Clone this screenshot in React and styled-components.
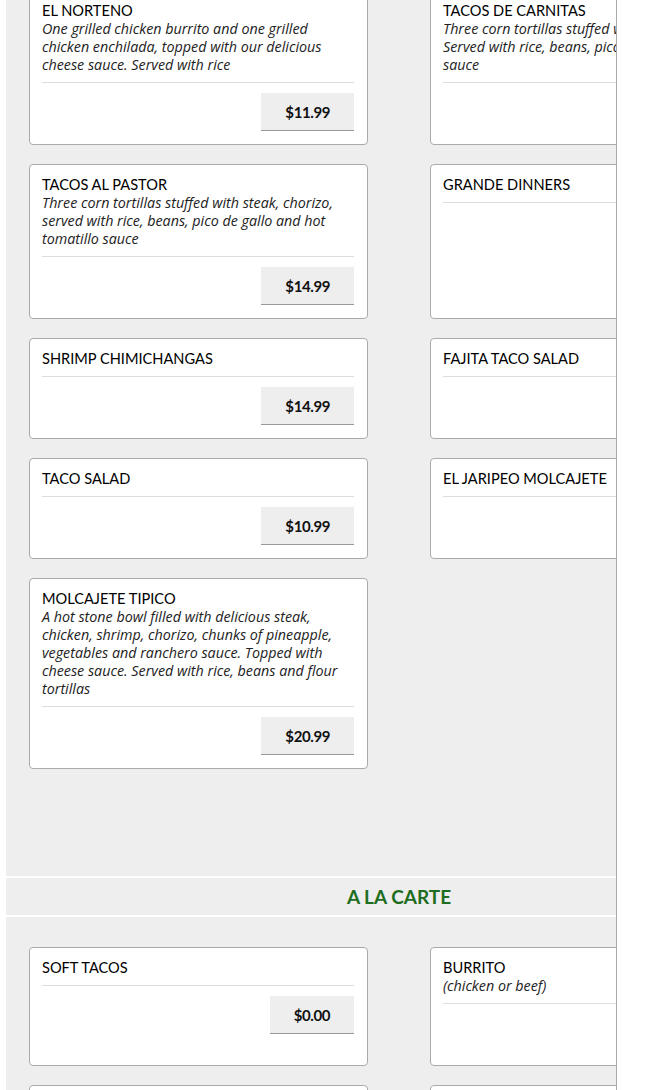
import React from "react";
import styled, { createGlobalStyle } from "styled-components";

const GlobalStyle = createGlobalStyle`
  body {
    margin: 0;
    background: #fff;
    font-family: "Lato", "Liberation Sans", sans-serif;
    color: #111;
  }
`;

const Frame = styled.div`
  margin-left: 6px;
  width: 610px;
  border-right: 1px solid #aaa;
  background: #eeeeee;
  overflow: hidden;
`;

const Inner = styled.div`
  width: 786px;
`;

const Grid = styled.div`
  display: grid;
  grid-template-columns: 339px 339px;
  column-gap: 62px;
  row-gap: 19px;
  padding: ${(p) => p.$pad};
  margin-top: ${(p) => p.$top || "0"};
`;

const Card = styled.div`
  background: #fff;
  border: 1px solid #aaa;
  border-radius: 4px;
  padding: 11px 13px 13px 12px;
  display: flex;
  flex-direction: column;
`;

const Head = styled.div`
  padding-bottom: 8px;
  border-bottom: 1px solid #ddd;
`;

const Title = styled.div`
  font-size: 14.6px;
  line-height: 18px;
  font-weight: 400;
  color: #000;
  text-transform: uppercase;
`;

const Desc = styled.div`
  font-family: "Open Sans", sans-serif;
  font-style: italic;
  font-size: 14.3px;
  line-height: 18px;
  color: #222;
`;

const Foot = styled.div`
  margin-top: 10px;
  display: flex;
  justify-content: flex-end;
`;

const Price = styled.button`
  height: 38px;
  padding: 0 24px;
  border: none;
  border-bottom: 1px solid #999;
  background: #eeeeee;
  font-family: "Lato", sans-serif;
  font-weight: 700;
  font-size: 15px;
  color: #111;
  letter-spacing: -0.4px;
`;

const SectionHead = styled.div`
  border-top: 2px solid #fff;
  border-bottom: 2px solid #fff;
  height: 37px;
  display: flex;
  align-items: center;
  justify-content: center;
  font-size: 19px;
  font-weight: 700;
  color: #1f6d1f;
`;

const dinners = [
  {
    name: "El Norteno",
    desc: "One grilled chicken burrito and one grilled chicken enchilada, topped with our delicious cheese sauce. Served with rice",
    price: "$11.99",
  },
  {
    name: "Tacos de Carnitas",
    desc: "Three corn tortillas stuffed with pork carnitas. Served with rice, beans, pico de gallo and hot sauce",
    price: "$13.99",
  },
  {
    name: "Tacos al Pastor",
    desc: "Three corn tortillas stuffed with steak, chorizo, served with rice, beans, pico de gallo and hot tomatillo sauce",
    price: "$14.99",
  },
  { name: "Grande Dinners", price: "$12.99" },
  { name: "Shrimp Chimichangas", price: "$14.99" },
  { name: "Fajita Taco Salad", price: "$11.99" },
  { name: "Taco Salad", price: "$10.99" },
  { name: "El Jaripeo Molcajete", price: "$22.99" },
  {
    name: "Molcajete Tipico",
    desc: "A hot stone bowl filled with delicious steak, chicken, shrimp, chorizo, chunks of pineapple, vegetables and ranchero sauce. Topped with cheese sauce. Served with rice, beans and flour tortillas",
    price: "$20.99",
  },
];

const carte = [
  { name: "Soft Tacos", price: "$0.00" },
  { name: "Burrito", desc: "(chicken or beef)", price: "$0.00" },
  { name: "Enchilada", price: "$0.00" },
  { name: "Tamale", price: "$0.00" },
];

const Item = ({ item }) => (
  <Card>
    <Head>
      <Title>{item.name}</Title>
      {item.desc && <Desc>{item.desc}</Desc>}
    </Head>
    <Foot>
      <Price>{item.price}</Price>
    </Foot>
  </Card>
);

export default function App() {
  return (
    <>
      <GlobalStyle />
      <Frame>
        <Inner>
          <Grid $top="-10px" $pad="0 23px 107px">
            {dinners.map((d) => (
              <Item key={d.name} item={d} />
            ))}
          </Grid>
          <SectionHead>A LA CARTE</SectionHead>
          <Grid $pad="30px 23px 40px">
            {carte.map((d) => (
              <Item key={d.name} item={d} />
            ))}
          </Grid>
        </Inner>
      </Frame>
    </>
  );
}
